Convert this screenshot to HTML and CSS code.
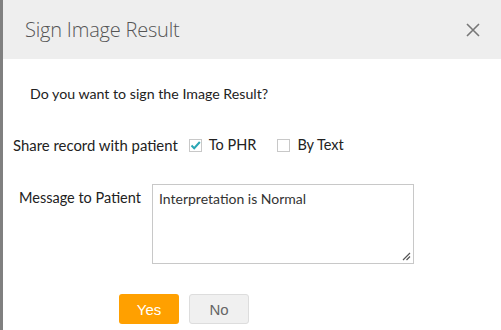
FILE: index.html
```html
<!DOCTYPE html>
<html>
<head>
<meta charset="utf-8">
<link rel="stylesheet" href="styles.css">
</head>
<body>
<div class="page">
  <div class="edge"></div>
  <div class="dialog">
    <div class="header">
      <div class="title">Sign Image Result</div>
      <svg class="close" width="14" height="14" viewBox="0 0 14 14"><path d="M1 1L13 13M13 1L1 13" stroke="#777" stroke-width="1.6" fill="none"/></svg>
    </div>
    <div class="body">
      <div class="question">Do you want to sign the Image Result?</div>
      <div class="share">
        <span class="label">Share record with patient</span>
        <span class="check checked"><svg width="13" height="13" viewBox="0 0 13 13"><path d="M2.5 6.5L5.2 9.2L10.8 3" stroke="#2aa7b5" stroke-width="2" fill="none"/></svg></span>
        <span class="opt">To PHR</span>
        <span class="check"></span>
        <span class="opt">By Text</span>
      </div>
      <div class="message">
        <span class="mlabel">Message to Patient</span>
        <div class="textarea">Interpretation is Normal
          <svg class="grip" width="9" height="9" viewBox="0 0 9 9"><path d="M8 1L1 8M8 4.5L4.5 8" stroke="#555" stroke-width="1.2" fill="none"/></svg>
        </div>
      </div>
      <div class="buttons">
        <button class="btn yes">Yes</button>
        <button class="btn no">No</button>
      </div>
    </div>
  </div>
</div>
</body>
</html>
```
FILE: styles.css
```css
html, body { margin: 0; padding: 0; background: #fff; }
.page { display: flex; width: 501px; height: 330px; overflow: hidden; }
.edge { width: 3px; background: #808080; flex: none; }
.dialog { flex: 1; display: flex; flex-direction: column; font-family: Lato, "Liberation Sans", sans-serif; color: #222; }
.header { height: 59px; background: #eeeeee; display: flex; align-items: center; justify-content: space-between; padding: 0 21px 0 22px; box-sizing: border-box; }
.title { font-family: "Open Sans", sans-serif; font-weight: 300; font-size: 20px; color: #555; letter-spacing: -0.2px; }
.body { padding: 0; font-size: 14.5px; }
.question { margin: 26px 0 0 27px; line-height: 18px; font-size: 14.2px; }
.share { display: flex; align-items: center; margin: 33px 0 0 10px; line-height: 18px; }
.label { margin-right: 11px; font-size: 14.9px; }
.check { width: 13px; height: 13px; border: 1px solid #c8c8c8; box-sizing: border-box; display: inline-flex; align-items: center; justify-content: center; margin-right: 7px; background: #fff; }
.check svg { flex: none; }
.opt { margin-right: 21px; }
.message { display: flex; margin: 30px 0 0 16px; }
.mlabel { width: 133px; margin-top: 5px; line-height: 18px; }
.textarea { position: relative; width: 262px; height: 80px; border: 1px solid #c8c8c8; box-sizing: border-box; padding: 5px 6px; line-height: 18px; color: #333; font-size: 14px; }
.grip { position: absolute; right: 2px; bottom: 2px; }
.buttons { display: flex; gap: 10px; margin: 30px 0 0 116px; }
.btn { width: 60px; height: 30px; border-radius: 3px; font-family: "Liberation Sans", Arial, sans-serif; font-size: 15px; padding: 0; }
.yes { background: #ffa000; color: #fff; border: none; }
.no { background: #f0f0f0; color: #666; border: 1px solid #ddd; }
```
